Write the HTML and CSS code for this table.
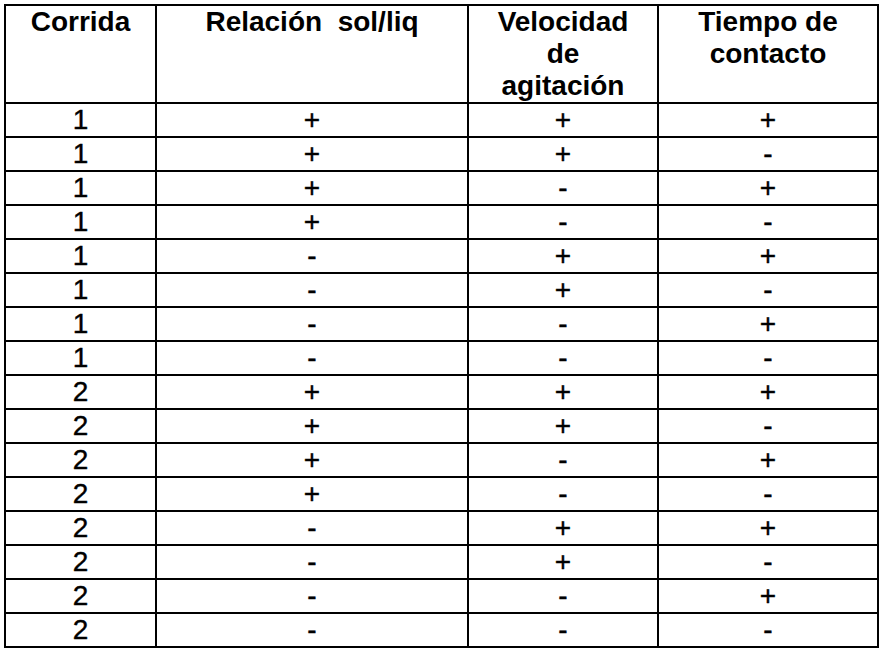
FILE: index.html
```html
<!DOCTYPE html>
<html lang="es">
<head>
<meta charset="utf-8">
<title>Corridas</title>
<link rel="stylesheet" href="styles.css">
</head>
<body>
<table class="grid">
  <colgroup>
    <col class="c1"><col class="c2"><col class="c3"><col class="c4">
  </colgroup>
  <thead>
    <tr>
      <th>Corrida</th>
      <th>Relación&nbsp; sol/liq</th>
      <th>Velocidad<br>de<br>agitación</th>
      <th>Tiempo de<br>contacto</th>
    </tr>
  </thead>
  <tbody>
    <tr><td>1</td><td>+</td><td>+</td><td>+</td></tr>
    <tr><td>1</td><td>+</td><td>+</td><td>-</td></tr>
    <tr><td>1</td><td>+</td><td>-</td><td>+</td></tr>
    <tr><td>1</td><td>+</td><td>-</td><td>-</td></tr>
    <tr><td>1</td><td>-</td><td>+</td><td>+</td></tr>
    <tr><td>1</td><td>-</td><td>+</td><td>-</td></tr>
    <tr><td>1</td><td>-</td><td>-</td><td>+</td></tr>
    <tr><td>1</td><td>-</td><td>-</td><td>-</td></tr>
    <tr><td>2</td><td>+</td><td>+</td><td>+</td></tr>
    <tr><td>2</td><td>+</td><td>+</td><td>-</td></tr>
    <tr><td>2</td><td>+</td><td>-</td><td>+</td></tr>
    <tr><td>2</td><td>+</td><td>-</td><td>-</td></tr>
    <tr><td>2</td><td>-</td><td>+</td><td>+</td></tr>
    <tr><td>2</td><td>-</td><td>+</td><td>-</td></tr>
    <tr><td>2</td><td>-</td><td>-</td><td>+</td></tr>
    <tr><td>2</td><td>-</td><td>-</td><td>-</td></tr>
  </tbody>
</table>
</body>
</html>
```

FILE: styles.css
```css
html, body {
  margin: 0;
  padding: 0;
  background: #ffffff;
}

body {
  padding: 4px 0 0 4px;
  font-family: "Liberation Sans", Arial, sans-serif;
  color: #000000;
}

.grid {
  table-layout: fixed;
  width: 875px;
  border-collapse: separate;
  border-spacing: 2px;
  background: #000000;
}

.grid .c1 { width: 149px; }
.grid .c2 { width: 310px; }
.grid .c3 { width: 188px; }
.grid .c4 { width: 218px; }

.grid th,
.grid td {
  background: #ffffff;
  padding: 0;
  text-align: center;
}

.grid th {
  height: 96px;
  vertical-align: top;
  font-weight: bold;
  font-size: 28px;
  line-height: 32px;
}

.grid td {
  height: 32px;
  vertical-align: middle;
  font-weight: normal;
  font-size: 28px;
  line-height: 32px;
  -webkit-text-stroke: 0.4px #000000;
}
```
